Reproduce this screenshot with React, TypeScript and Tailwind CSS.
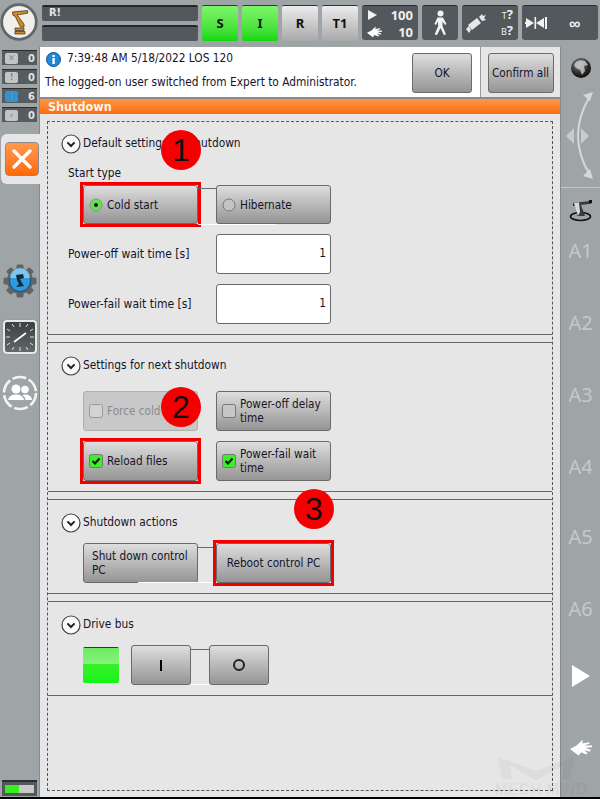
import React from "react";

const FONT = "font-['DejaVu_Sans_Condensed','Noto_Sans',sans-serif]";

function Chevron() {
  return (
    <svg width="20" height="20" viewBox="0 0 20 20" className="shrink-0">
      <circle cx="10" cy="10" r="9" fill="#fafafa" stroke="#444" strokeWidth="1.2" />
      <path d="M6.4 8.4 L10 12 L13.6 8.4" fill="none" stroke="#222" strokeWidth="2" />
    </svg>
  );
}

function Head({ children }: { children: React.ReactNode }) {
  return (
    <div className="flex h-5 items-center gap-[2px] text-[11.8px] text-[#14142a]">
      <Chevron />
      <span>{children}</span>
    </div>
  );
}

function Radio({ on }: { on?: boolean }) {
  return (
    <svg width="14" height="14" viewBox="0 0 14 14" className="shrink-0">
      <circle cx="7" cy="7" r="6" fill={on ? "#5ee64a" : "#c4c4c4"} stroke={on ? "#8d8d8d" : "#777"} strokeWidth="1" />
      {on && <circle cx="7" cy="7" r="2" fill="#111" />}
    </svg>
  );
}

function Check({ on, dim }: { on?: boolean; dim?: boolean }) {
  return (
    <svg width="14" height="14" viewBox="0 0 14 14" className="shrink-0">
      <rect x="0.5" y="0.5" width="13" height="13" rx="2" fill={on ? "#3cf028" : dim ? "#d2d2d2" : "#c6c6c6"} stroke={dim ? "#9a9a9a" : "#777"} />
      {on && <path d="M3.5 7 L6 9.5 L10.5 4.5" fill="none" stroke="#111" strokeWidth="2" />}
    </svg>
  );
}

function Btn({
  children,
  w = "w-[115px]",
  h = "h-[40px]",
  dim,
  red,
  center,
}: {
  children: React.ReactNode;
  w?: string;
  h?: string;
  dim?: boolean;
  red?: boolean;
  center?: boolean;
}) {
  const b = (
    <div
      className={`${w} ${h} flex shrink-0 items-center gap-[4px] rounded-[3px] border text-[11.7px] leading-[14px] ${
        center ? "justify-center" : "pl-[5px] pr-[3px]"
      } ${
        dim
          ? "border-[#b0b0b0] bg-[#c8c8c8] text-[#8c8c8c]"
          : "border-[#6a6a6a] bg-gradient-to-b from-[#dedede] to-[#959595] text-[#14142a]"
      }`}
    >
      {children}
    </div>
  );
  return red ? <div className="-m-[3px] shrink-0 border-[3px] border-[#f00000]">{b}</div> : b;
}

function Link({ className, lineClass = "" }: { className: string; lineClass?: string }) {
  return (
    <div className={`flex w-[18px] shrink-0 flex-col self-start border-t border-[#6a6a6a] ${className}`}>
      <div className={`mt-auto h-px shrink-0 bg-white ${lineClass}`} />
    </div>
  );
}

function Input() {
  return (
    <div className="flex h-[40px] w-[115px] items-center justify-end rounded-[3px] border border-[#6a6a6a] bg-white pr-[4px] text-[11.8px] text-[#14142a]">
      1
    </div>
  );
}

function Section({ children, className = "" }: { children: React.ReactNode; className?: string }) {
  return <section className={`border-y border-x-0 border-[#666] pl-[13px] ${className}`}>{children}</section>;
}

function Badge({ n, glyph, color = "#c4c4c4" }: { n: string; glyph: string; color?: string }) {
  return (
    <div className="flex h-[15px] w-[35px] items-center justify-between border-t border-[#2a2d2f] bg-[#565c60] pl-[3px] pr-[2px] text-[11px] font-semibold leading-none text-[#e4e4e4]">
      <span
        className="flex h-[11px] w-[13px] items-center justify-center rounded-[2px] text-[9px] font-bold text-[#888]"
        style={{ backgroundColor: color }}
      >
        {glyph}
      </span>
      <span>{n}</span>
    </div>
  );
}

function Globe() {
  return (
    <svg width="22" height="22" viewBox="0 0 22 22">
      <defs>
        <radialGradient id="g" cx="0.4" cy="0.3" r="0.8">
          <stop offset="0" stopColor="#8a8a8a" />
          <stop offset="0.6" stopColor="#2a2a2a" />
          <stop offset="1" stopColor="#000" />
        </radialGradient>
      </defs>
      <circle cx="11" cy="11" r="10" fill="url(#g)" />
      <path d="M6 5 Q10 2 15 4 L18 8 L14 9 L15 14 L12 18 L10 13 L6 11 L4 8 Z" fill="#d4d4d4" opacity="0.75" />
    </svg>
  );
}

function Hand({ size = 20 }: { size?: number }) {
  return (
    <svg width={size} height={size * 0.8} viewBox="0 0 20 16" fill="#fff">
      <path d="M0 9 L6 6 L10 2 L12 1 L11 4 L17 3 L18 4 L13 6 L20 6 L20 7.5 L14 8 L19 10 L18 11.5 L13 10 L16 13 L15 14 L10 12 L8 15 L5 13 Z" />
    </svg>
  );
}

function Gear() {
  return (
    <svg width="34" height="34" viewBox="0 0 34 34">
      <g fill="#5f6468">
        <circle cx="17" cy="17" r="13" />
        {[0, 45, 90, 135, 180, 225, 270, 315].map((a) => (
          <rect key={a} x="13.5" y="0.5" width="7" height="7" rx="1.5" transform={`rotate(${a} 17 17)`} />
        ))}
      </g>
      <circle cx="17" cy="17" r="10.5" fill="#2f9ae0" stroke="#16506f" />
      <path d="M7 14 A10 10 0 0 1 27 14 Z" fill="#7cc6ef" />
      <path d="M13 11 L20 10 L21 14 L17 15 L19 19 L21 22 L13 23 L16 20 L14 16 Z" fill="#10293a" />
    </svg>
  );
}

function ClockIcon() {
  return (
    <div className="flex h-[34px] w-[34px] items-center justify-center rounded-[4px] border-2 border-[#e8e8e8] bg-gradient-to-b from-[#3b4043] to-[#62676a] shadow-[0_0_1px_#666]">
      <svg width="30" height="30" viewBox="0 0 30 30" stroke="#e0e0e0" strokeWidth="1" fill="none">
        <path d="M15 1V5M15 25V29M1 15H5M25 15H29M7 2L9 5M23 2L21 5M2 7L5 9M2 23L5 21M28 7L25 9M28 23L25 21M7 28L9 25M23 28L21 25" />
        <path d="M9 20L21 11" strokeWidth="1.6" stroke="#fff" />
      </svg>
    </div>
  );
}

function UsersIcon() {
  return (
    <svg width="36" height="36" viewBox="0 0 36 36" fill="#fff">
      <circle cx="18" cy="18" r="16" fill="none" stroke="#f2f2f2" strokeWidth="2.6" strokeDasharray="14 2.8" />
      <circle cx="14" cy="14" r="4.5" />
      <circle cx="23" cy="14.5" r="3.8" />
      <path d="M6 25 Q7 19.5 14 19.5 Q21 19.5 22 25 Z" />
      <path d="M23.5 25 H30 Q29.5 19.5 23 19.5 Q21 19.5 20.5 20 Q23 21.5 23.5 25 Z" />
    </svg>
  );
}

function RobotLogo() {
  return (
    <svg width="38" height="38" viewBox="0 0 38 38">
      <circle cx="19" cy="19" r="17.3" fill="#f0efea" stroke="#62676b" strokeWidth="2.8" />
      <g stroke="#4a3c26" strokeWidth="0.8" fill="#cf8a26">
        <path d="M12.5 9 L27.5 7.5 L28 10 L20 11.5 L17 11.8 L24 21 L24 24 L20.5 24 L15 13 L13 12.5 Z" />
        <path d="M15 25 H24 V27.5 H15 Z" />
        <path d="M15 28.5 H25 V31 H15 Z" />
      </g>
    </svg>
  );
}

function Tool() {
  return (
    <svg width="22" height="22" viewBox="0 0 22 22" fill="#e8e8e8">
      <path d="M2 13 L11 6 L15 11 L6 18 Z" />
      <path d="M13 5 L16 2 L17 4 L20 3 L18 6 L20 8 L16 9 Z" />
      <path d="M0 17 L3 14 L5 18 L3 21 Z" />
    </svg>
  );
}

function Walker() {
  return (
    <svg width="18" height="26" viewBox="0 0 18 26" fill="#f2f2f2">
      <circle cx="9.5" cy="3.5" r="3" />
      <path d="M6.5 7.5 H12 L15.5 14 L14 15 L11.5 11.5 L11.5 16 L15 24.5 L12.8 25 L9.5 18 L6 25 L3.6 24.5 L7.2 16 L7 11.5 L5 15 L3.4 14 Z" />
    </svg>
  );
}

function AxisArrows() {
  return (
    <svg width="40" height="90" viewBox="0 0 40 90" className="shrink-0">
      <path d="M29 5 Q5 45 29 84" fill="none" stroke="#d5d8da" strokeWidth="2" />
      <path d="M32 1 L22 4 L29 10 Z M32 88 L22 85 L29 78 Z" fill="#d5d8da" />
      <path d="M5 45 L13 37 V53 Z M28 45 L20 37 V53 Z" fill="#c8cbcd" />
    </svg>
  );
}

function RobotAxis() {
  return (
    <svg width="24" height="22" viewBox="0 0 24 22">
      <ellipse cx="11.5" cy="16.5" rx="10" ry="4" fill="none" stroke="#111" strokeWidth="1.6" />
      <path d="M4 3 L21 1 L20 4 L12 5 L16 16 L8 16 L9 6 L4 6 Z" fill="#3a3a3a" />
      <path d="M5 3 L10 2.5 L11 12 L9 16 Z" fill="#d8d8d8" />
      <path d="M20 0 L23 0 L23 3 L20 4 Z" fill="#111" />
    </svg>
  );
}

function TopBtn({ label, green }: { label: string; green?: boolean }) {
  return (
    <div
      className={`flex h-[36px] w-[36px] items-center justify-center rounded-[2px] border-t border-[#333] font-['Noto_Sans',sans-serif] text-[13px] font-bold text-[#111] ${
        green ? "bg-gradient-to-b from-[#7cf56a] to-[#0ed80a]" : "bg-gradient-to-b from-[#ececec] to-[#a9a9a9]"
      }`}
    >
      {label}
    </div>
  );
}

function AxisLabel({ t, className = "h-[72px]" }: { t: string; className?: string }) {
  return <div className={`font-['Noto_Sans',sans-serif] text-center text-[20px] leading-[26px] text-[#c3c9cf] ${className}`}>{t}</div>;
}

export default function App() {
  return (
    <div className={`relative flex h-[799px] w-[600px] flex-col overflow-hidden bg-[#9fa4a7] ${FONT}`}>
      {/* top bar */}
      <header className="flex h-[47px] shrink-0 items-start">
        <div className="mt-[3px] w-[42px] shrink-0">
          <RobotLogo />
        </div>
        <div className="mt-[5px] flex w-[156px] shrink-0 flex-col gap-[4px]">
          <div className="h-[16px] rounded-[2px] border-t-2 border-[#26292b] bg-[#52585b] pl-[7px] text-[11px] font-bold leading-[11px] text-[#e6e6e6]">
            R!
          </div>
          <div className="h-[16px] rounded-[2px] border-t-2 border-[#26292b] bg-[#52585b]" />
        </div>
        <div className="ml-[4px] mt-[5px] flex gap-[4px]">
          <TopBtn label="S" green />
          <TopBtn label="I" green />
          <TopBtn label="R" />
          <TopBtn label="T1" />
          <div className="grid h-[35px] w-[56px] grid-cols-[20px_1fr] items-center rounded-[3px] border-t border-[#2a2d2f] bg-[#52585b] pl-[5px] pr-[5px] font-['Noto_Sans',sans-serif] text-[13px] font-bold leading-[16px] text-[#efefef]">
            <svg width="12" height="12" viewBox="0 0 12 12" fill="#f2f2f2"><path d="M1 1 L10 6 L1 11 Z" /></svg>
            <span className="text-right">100</span>
            <Hand size={15} />
            <span className="text-right">10</span>
          </div>
          <div className="flex h-[35px] w-[36px] items-center justify-center rounded-[3px] border-t border-[#2a2d2f] bg-[#52585b]">
            <Walker />
          </div>
          <div className="flex h-[35px] w-[56px] items-center justify-between rounded-[3px] border-t border-[#2a2d2f] bg-[#52585b] pl-[4px] pr-[5px]">
            <Tool />
            <div className="text-right font-['Noto_Sans',sans-serif] text-[13px] font-bold leading-[15px] text-[#efefef]">
              <div><span className="text-[9px] font-normal">T</span>?</div>
              <div><span className="text-[9px] font-normal">B</span>?</div>
            </div>
          </div>
          <div className="flex h-[35px] w-[76px] items-center rounded-[3px] border-t border-[#2a2d2f] bg-[#52585b] pl-[3px] font-['Noto_Sans',sans-serif] text-[16px] font-bold text-[#efefef]">
            <svg width="24" height="14" viewBox="0 0 24 14" fill="#f2f2f2">
              <path d="M1 2 L9 7 L1 12 Z M19 2 L11 7 L19 12 Z" />
              <rect x="9.5" y="1" width="1.6" height="12" />
              <rect x="20" y="1" width="2" height="12" />
              <path d="M0 6 H6 V8 H0 Z" />
            </svg>
            <span className="ml-[20px]">∞</span>
          </div>
        </div>
      </header>

      <div className="flex min-h-0 flex-1 border-b-2 border-black">
        {/* left rail */}
        <aside className="flex w-[40px] shrink-0 flex-col border-r border-[#85898c]">
          <div className="ml-[2px] mt-[3px] flex flex-col gap-[4px]">
            <Badge n="0" glyph="✕" />
            <Badge n="0" glyph="!" />
            <Badge n="6" glyph="i" color="#2f93d8" />
            <Badge n="0" glyph="‹" />
          </div>
          <div className="ml-px mt-[12px] flex h-[50px] w-[39px] items-center justify-center rounded-l-[6px] bg-[#e6e6e6] pl-[3px]">
            <div className="flex h-[34px] w-[34px] items-center justify-center rounded-[4px] border border-[#8a8a8a] bg-gradient-to-b from-[#ff9a4a] to-[#ff6a00]">
              <svg width="22" height="22" viewBox="0 0 22 22" stroke="#fff" strokeWidth="3.4" strokeLinecap="round">
                <path d="M3 3 L19 19 M19 3 L3 19" />
              </svg>
            </div>
          </div>
          <div className="ml-[3px] mt-[80px]">
            <Gear />
          </div>
          <div className="ml-[3px] mt-[22px]">
            <ClockIcon />
          </div>
          <div className="ml-[2px] mt-[21px]">
            <UsersIcon />
          </div>
          <div className="ml-[2px] mt-auto mb-[1px] flex h-[16px] w-[35px] items-center border-t-2 border-[#2a2d2f] bg-[#52585b] px-[3px]">
            <div className="flex h-[8px] w-full bg-[#c8c8c8]">
              <div className="h-full w-[14px] bg-[#37ee20]" />
            </div>
          </div>
        </aside>

        {/* centre */}
        <main className="flex min-w-0 flex-1 flex-col bg-[#e6e6e6]">
          <div className="flex h-[52px] shrink-0 border-b-2 border-[#8b8b8b] text-[11.8px] text-[#14142a]">
            <div className="flex min-w-0 flex-1 gap-[5px] bg-white">
              <div className="flex w-[367px] shrink-0 flex-col pl-[5px]">
                <div className="flex h-[24px] shrink-0 items-center gap-[6px] pl-[1px]">
                  <svg width="15" height="15" viewBox="0 0 15 15">
                    <circle cx="7.5" cy="7.5" r="7" fill="#1e88d8" stroke="#1d4f80" />
                    <rect x="6.4" y="6" width="2.4" height="6" fill="#fff" />
                    <rect x="6.4" y="3" width="2.4" height="2" fill="#fff" />
                  </svg>
                  7:39:48 AM 5/18/2022 LOS 120
                </div>
                <div className="-mt-px h-[24px] shrink-0 whitespace-nowrap leading-[24px]">
                  The logged-on user switched from Expert to Administrator.
                </div>
              </div>
              <div className="mt-[6px]">
                <Btn w="w-[60px]" center>OK</Btn>
              </div>
            </div>
            <div className="flex w-[80px] shrink-0 justify-center border-l border-[#9a9a9a] pt-[6px]">
              <Btn w="w-[66px]" center>Confirm all</Btn>
            </div>
          </div>
          <div className="h-[15px] shrink-0 bg-gradient-to-b from-[#ff9640] to-[#ff6a0a] pl-[8px] text-[12.5px] font-bold leading-[15px] text-[#fff4e8]">
            Shutdown
          </div>

          <div className="mx-[7px] mb-[6px] mt-[7px] flex min-h-0 flex-1 flex-col gap-[7px] border border-dashed border-[#555] text-[#14142a]">
            <Section className="h-[213px] border-t-0 pt-[12px]">
              <Head>Default settings for shutdown</Head>
              <div className="mt-[11px] pl-[7px] text-[11.8px] leading-[16px]">Start type</div>
              <div className="ml-[22px] mt-[4px] flex h-[39px]">
                <Btn h="h-[39px]" red><Radio on />Cold start</Btn>
                <Link className="mt-[3px] h-[37px]" lineClass="-mr-[60px]" />
                <Btn h="h-[39px]"><Radio />Hibernate</Btn>
              </div>
              <div className="ml-[7px] mt-[10px] flex flex-col gap-[10px] text-[12px]">
                <div className="flex items-center">
                  <span className="w-[148px]">Power-off wait time [s]</span>
                  <Input />
                </div>
                <div className="flex items-center">
                  <span className="w-[148px]">Power-fail wait time [s]</span>
                  <Input />
                </div>
              </div>
            </Section>
            <Section className="h-[150px] pt-[13px]">
              <Head>Settings for next shutdown</Head>
              <div className="ml-[22px] mt-[15px] grid w-[248px] grid-cols-[115px_115px] gap-x-[18px] gap-y-[10px]">
                <Btn dim><Check dim />Force cold</Btn>
                <Btn><Check />Power-off delay time</Btn>
                <Btn red><Check on />Reload files</Btn>
                <Btn><Check on />Power-fail wait time</Btn>
              </div>
            </Section>
            <Section className="h-[95px] pt-[13px]">
              <Head>Shutdown actions</Head>
              <div className="ml-[22px] mt-[10px] flex h-[40px]">
                <Btn><span className="pl-[3px]">Shut down control PC</span></Btn>
                <Link className="mt-[4px] h-[36px]" lineClass="-ml-[60px]" />
                <Btn red center>Reboot control PC</Btn>
              </div>
            </Section>
            <Section className="h-[95px] pt-[13px]">
              <Head>Drive bus</Head>
              <div className="ml-[22px] mt-[10px] flex h-[40px] items-start">
                <div className="mr-[12px] mt-[2px] flex h-[36px] w-[36px] shrink-0 flex-col overflow-hidden rounded-[2px] border-t border-[#333]">
                  <div className="h-[16px] bg-gradient-to-b from-[#6cec60] to-[#86f27c]" />
                  <div className="flex-1 bg-gradient-to-b from-[#36f02a] to-[#10f510]" />
                </div>
                <Btn w="w-[60px]" center>
                  <span className="block h-[11px] w-[2px] bg-black" />
                </Btn>
                <Link className="mt-[4px] h-[36px]" />
                <Btn w="w-[60px]" center>
                  <span className="block h-[12px] w-[12px] rounded-full border-2 border-[#222]" />
                </Btn>
              </div>
            </Section>
          </div>
        </main>

        {/* right rail */}
        <aside className="flex w-[40px] shrink-0 flex-col items-center border-l border-[#85898c]">
          <div className="mt-[10px]">
            <Globe />
          </div>
          <div className="flex h-[109px] w-full shrink-0 justify-center border-b border-[#c3c6c8] pt-[12px]">
            <AxisArrows />
          </div>
          <div className="mt-[12px] h-[24px]">
            <RobotAxis />
          </div>
          <div className="mt-[14px] w-full">
            <AxisLabel t="A1" />
            <AxisLabel t="A2" />
            <AxisLabel t="A3" />
            <AxisLabel t="A4" className="h-[70px]" />
            <AxisLabel t="A5" />
            <AxisLabel t="A6" />
          </div>
          <svg width="20" height="22" viewBox="0 0 20 22" fill="#fff" className="mt-[-3px] shrink-0">
            <path d="M1 0 L19 11 L1 22 Z" />
          </svg>
          <div className="mt-[52px]">
            <Hand size={22} />
          </div>
        </aside>
      </div>

      {/* call-out numbers */}
      <div className="absolute left-[161px] top-[130px] flex h-[40px] w-[40px] items-center justify-center rounded-full bg-[#f50000] font-['Liberation_Sans',sans-serif] text-[32px] text-[#111]">1</div>
      <div className="absolute left-[161px] top-[387px] flex h-[40px] w-[40px] items-center justify-center rounded-full bg-[#f50000] font-['Liberation_Sans',sans-serif] text-[32px] text-[#111]">2</div>
      <div className="absolute left-[294px] top-[489px] flex h-[40px] w-[40px] items-center justify-center rounded-full bg-[#f50000] font-['Liberation_Sans',sans-serif] text-[32px] text-[#111]">3</div>

      {/* faint watermark */}
      <div className="pointer-events-none absolute left-[482px] top-[757px] w-[118px] text-center font-['Liberation_Sans',sans-serif] opacity-[0.03]">
        <svg width="90" height="24" viewBox="0 0 90 24" className="mx-auto" fill="#000">
          <path d="M2 0 L40 14 L78 0 L74 22 L66 22 L68 8 L40 24 L14 8 L16 22 L6 22 Z" />
        </svg>
        <div className="mt-[1px] whitespace-nowrap text-[16px] font-bold leading-none text-black">MECH MIND</div>
      </div>
    </div>
  );
}
